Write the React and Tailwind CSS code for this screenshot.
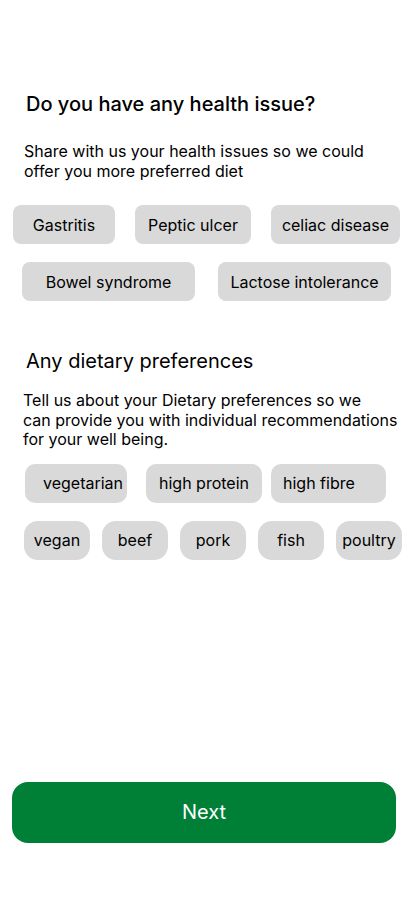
import React from 'react'

const Chip = ({ label, className }) => (
  <button className={`h-[39px] flex items-center bg-[#d9d9d9] text-[16px] text-black ${className}`}>
    {label}
  </button>
)

const App = () => {
  return (
    <div className="min-h-[917px] w-[412px] bg-white flex flex-col" style={{ fontFamily: 'Inter, "Noto Sans", sans-serif' }}>
      <h1 className="ml-[26px] mt-[92px] text-[20px] leading-[24px] font-medium text-black">Do you have any health issue?</h1>
      <p className="ml-[24px] mt-[26px] text-[16px] leading-[19.5px] text-black">
        Share with us your health issues so we could<br />offer you more preferred diet
      </p>

      {/* health issues */}
      <div className="mt-[24px] flex pl-[13px] gap-[20px]">
        <Chip label="Gastritis" className="w-[102px] justify-center rounded-[8px]" />
        <Chip label="Peptic ulcer" className="w-[116px] justify-center rounded-[8px]" />
        <Chip label="celiac disease" className="w-[129px] justify-center rounded-[8px]" />
      </div>
      <div className="mt-[18px] flex pl-[22px] gap-[23px]">
        <Chip label="Bowel syndrome" className="w-[173px] justify-center rounded-[8px]" />
        <Chip label="Lactose intolerance" className="w-[173px] justify-center rounded-[8px]" />
      </div>

      <h2 className="ml-[26px] mt-[48px] text-[20px] leading-[24px] font-normal text-black">Any dietary preferences</h2>
      <p className="ml-[23px] mt-[18px] text-[16px] leading-[19.5px] text-black">
        Tell us about your Dietary preferences so we<br />can provide you with individual recommendations<br />for your well being.
      </p>

      {/* dietary preferences */}
      <div className="mt-[14px] flex pl-[25px]">
        <Chip label="vegetarian" className="w-[102px] pl-[18px] rounded-[10px]" />
        <Chip label="high protein" className="ml-[19px] w-[116px] justify-center rounded-[10px]" />
        <Chip label="high fibre" className="ml-[9px] w-[115px] pl-[12px] rounded-[10px]" />
      </div>
      <div className="mt-[18px] flex pl-[24px] gap-[12px]">
        <Chip label="vegan" className="w-[66px] justify-center rounded-[14px]" />
        <Chip label="beef" className="w-[66px] justify-center rounded-[14px]" />
        <Chip label="pork" className="w-[66px] justify-center rounded-[14px]" />
        <Chip label="fish" className="w-[66px] justify-center rounded-[14px]" />
        <Chip label="poultry" className="w-[66px] justify-center rounded-[14px]" />
      </div>

      <div className="mt-[222px] px-[12px] w-[408px]">
        <button className="w-full h-[61px] rounded-[16px] bg-[#008037] text-white text-[20px]">Next</button>
      </div>
    </div>
  )
}

export default App
